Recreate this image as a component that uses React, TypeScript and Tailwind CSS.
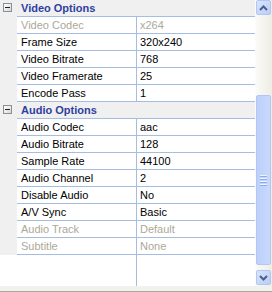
import React from "react";

type Prop = { label: string; value: string; disabled?: boolean };

const video: Prop[] = [
  { label: "Video Codec", value: "x264", disabled: true },
  { label: "Frame Size", value: "320x240" },
  { label: "Video Bitrate", value: "768" },
  { label: "Video Framerate", value: "25" },
  { label: "Encode Pass", value: "1" },
];

const audio: Prop[] = [
  { label: "Audio Codec", value: "aac" },
  { label: "Audio Bitrate", value: "128" },
  { label: "Sample Rate", value: "44100" },
  { label: "Audio Channel", value: "2" },
  { label: "Disable Audio", value: "No" },
  { label: "A/V Sync", value: "Basic" },
  { label: "Audio Track", value: "Default", disabled: true },
  { label: "Subtitle", value: "None", disabled: true },
];

function Category({ title }: { title: string }) {
  return (
    <div className="flex h-[17px] bg-[#f0f0f0]">
      <div className="w-[17px] shrink-0 pl-[3px] pt-[3px]">
        {/* collapse box */}
        <div className="w-[9px] h-[9px] border border-[#8a9099] bg-gradient-to-br from-white to-[#d8d8d2] flex items-center justify-center">
          <div className="w-[5px] h-px bg-[#222]" />
        </div>
      </div>
      <div className="flex-1 border-b border-[#a5bde3] pl-[4px] leading-[16px] font-bold text-[#2f3f9f]">
        {title}
      </div>
    </div>
  );
}

function Row({ p }: { p: Prop }) {
  const tone = p.disabled ? "text-[#aca899]" : "text-black";
  return (
    <div className="flex h-[17px]">
      <div className="w-[17px] shrink-0 bg-[#f0f0f0]" />
      <div className="flex flex-1 border-b border-[#a5bde3] bg-white leading-[16px]">
        <div className={`w-[119px] shrink-0 pl-[4px] ${tone}`}>{p.label}</div>
        <div className={`flex-1 border-l border-[#a5bde3] pl-[3px] ${tone}`}>{p.value}</div>
      </div>
    </div>
  );
}

function Chevron({ up }: { up?: boolean }) {
  return (
    <svg width="9" height="6" viewBox="0 0 9 6" className={up ? "" : "rotate-180"}>
      <path d="M1 5 L4.5 1.5 L8 5" fill="none" stroke="#4d6185" strokeWidth="2" />
    </svg>
  );
}

function ArrowButton({ up }: { up?: boolean }) {
  return (
    <div className="mx-[1px] h-[15px] rounded-[2px] border border-[#b3c6f0] bg-gradient-to-br from-[#d9e5fd] to-[#b9cdfa] flex items-center justify-center">
      <Chevron up={up} />
    </div>
  );
}

function Scrollbar() {
  return (
    <div className="w-[17px] shrink-0 flex flex-col bg-gradient-to-r from-[#fbfbf8] to-[#eeede5]">
      <ArrowButton up />
      <div className="h-[80px]" />
      <div className="mx-[1px] h-[170px] rounded-[2px] border border-[#b3c6f0] bg-gradient-to-r from-[#bdd0fb] to-[#c8d9fd] flex flex-col items-center justify-center gap-px">
        {[0, 1, 2, 3].map((i) => (
          <div key={i} className="w-[7px] h-px bg-[#eef4fe] border-b border-[#8cacf0] box-content" />
        ))}
      </div>
      <div className="h-[5px]" />
      <ArrowButton />
    </div>
  );
}

export default function App() {
  return (
    <div
      className="w-[272px] h-[292px] flex flex-col bg-white text-[11px] overflow-hidden"
      style={{ fontFamily: '"Liberation Sans", Arial, sans-serif' }}
    >
      <div className="h-[286px] flex">
        <div className="w-[255px] flex flex-col">
          <Category title="Video Options" />
          {video.map((p) => (
            <Row key={p.label} p={p} />
          ))}
          <Category title="Audio Options" />
          {audio.map((p) => (
            <Row key={p.label} p={p} />
          ))}
          <div className="flex-1 flex">
            <div className="w-[136px]" />
            <div className="flex-1 border-l border-[#a5bde3]" />
          </div>
        </div>
        <Scrollbar />
      </div>
      <div className="flex-1 bg-[#f1f1ee] border-b border-[#aca899]" />
    </div>
  );
}
